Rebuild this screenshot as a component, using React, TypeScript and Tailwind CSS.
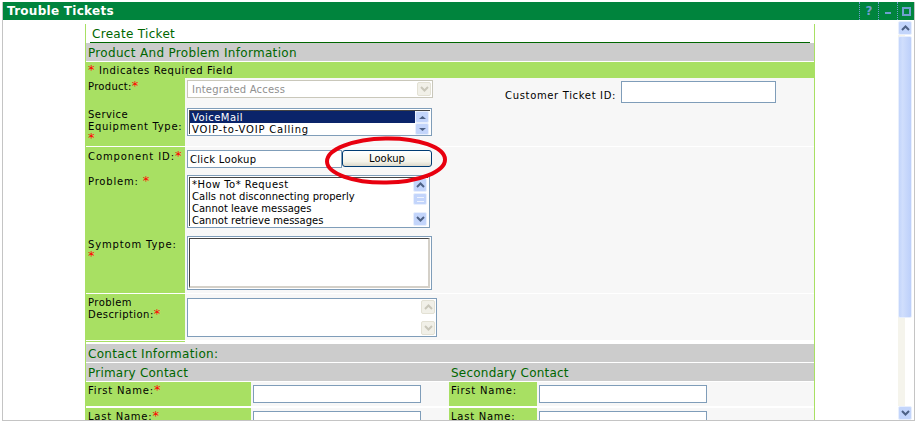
import React from "react";

const font = "font-['DejaVu_Sans','Liberation_Sans',sans-serif]";

function Star() {
  return <span className="text-[#ff0000] text-[13px] leading-[0] tracking-normal">*</span>;
}

function ScrollBtn({ dir, disabled = false }: { dir: "up" | "down"; disabled?: boolean }) {
  return (
    <div className={`w-[14px] h-[14px] flex items-center justify-center rounded-[2px] border ${disabled ? "bg-[#f1f0e8] border-[#e3e1d4]" : "bg-[#c3d5fb] border-[#e8effd]"}`}>
      <svg width="9" height="6" viewBox="0 0 9 6" fill="none" stroke={disabled ? "#c9c7ba" : "#4d6185"} strokeWidth="2">
        <path d={dir === "up" ? "M1 5L4.5 1.5L8 5" : "M1 1L4.5 4.5L8 1"} />
      </svg>
    </div>
  );
}

function MiniBtn({ dir }: { dir: "up" | "down" }) {
  return (
    <div className="w-[14px] h-[12px] flex items-center justify-center rounded-[2px] bg-[#c3d5fb] border border-[#e8effd]">
      <svg width="7" height="3" viewBox="0 0 7 3" fill="#4d6185">
        <path d={dir === "up" ? "M0 3L3.5 0L7 3Z" : "M0 0L7 0L3.5 3Z"} />
      </svg>
    </div>
  );
}

function Section({ children }: { children: React.ReactNode }) {
  return <div className="h-[18px] bg-[#cccccc] text-[#006600] text-[12px] leading-[20px] tracking-[0.32px] pl-[2px]">{children}</div>;
}

function TextInput() {
  return <div className="w-[168px] h-[18px] bg-white border border-[#7f9db9]" />;
}

export default function App() {
  return (
    <div className={`relative w-[920px] h-[425px] bg-white overflow-hidden pt-[2px] pl-[2px] ${font}`}>
      <div className="w-[913px] h-[419px] border-l border-r border-b border-[#c4c4c4] flex flex-col overflow-hidden">
        <div className="h-[18px] shrink-0 bg-[#00843d] flex items-center justify-between">
          <span className="text-white font-bold text-[12px] tracking-[0.28px] pl-[4px]">Trouble Tickets</span>
          <div className="flex h-[18px] text-[#6f9fd0]">
            <div className="w-[19px] h-full border-l border-dotted border-[#6f9fd0] flex items-center justify-center font-bold text-[12px]">?</div>
            <div className="w-[19px] h-full border-l border-dotted border-[#6f9fd0] flex items-center justify-center">
              <div className="w-[6px] h-[2px] mt-[3px] bg-[#6f9fd0]" />
            </div>
            <div className="w-[17px] h-full border-l border-dotted border-[#6f9fd0] flex items-center justify-center">
              <div className="w-[5px] h-[5px] border-2 border-[#6f9fd0] box-content" />
            </div>
          </div>
        </div>

        <div className="flex flex-1 min-h-0">
          <div className="flex-1 min-w-0 pl-[82px] pt-[4px] overflow-hidden">
            <div className="w-[730px] border-l border-r border-[#a8e063] text-[10px] leading-[12px] tracking-[0.45px] text-black">
              <div className="h-[19px] pl-[4px] pr-[4px]">
                <div className="h-[19px] border-b border-[#006600] text-[#006600] text-[12px] leading-[20px] tracking-[0.3px] pl-[2px]">Create Ticket</div>
              </div>
              <Section>Product And Problem Information</Section>
              <div className="flex h-[16px] mt-[1px] bg-[#a8e063] pl-[2px] leading-[17px] tracking-[0.62px]">
                <div className="w-[11px] shrink-0"><Star /></div>
                <div>Indicates Required Field</div>
              </div>

              <div className="flex h-[68px] bg-[#f7f7f7]">
                <div className="w-[99px] bg-[#a8e063] pl-[2px] pt-[3px] shrink-0">
                  <div className="tracking-[0.3px]">Product:<Star /></div>
                  <div className="mt-[16px]">Service</div>
                  <div className="tracking-[0.7px] whitespace-nowrap">Equipment Type:</div>
                  <div><Star /></div>
                </div>
                <div className="flex-1 pl-[2px] pt-[2px]">
                  <div className="flex items-start">
                    <div className="w-[246px] h-[18px] border border-[#c9c7ba] bg-white flex items-center justify-between pl-[4px] pr-[1px] text-[#909090] tracking-[0.2px] leading-[18px]">
                      <span className="pt-[1px]">Integrated Access</span>
                      <ScrollBtn dir="down" disabled />
                    </div>
                    <div className="ml-[72px] pt-[10px] pr-[5px] w-[116px] flex justify-end tracking-[0.65px] whitespace-nowrap">Customer Ticket ID:</div>
                    <div className="w-[155px] h-[22px] mt-[1px] bg-white border border-[#7f9db9]" />
                  </div>
                  <div className="mt-[5px] w-[245px] h-[28px] border border-[#7f9db9] p-[1px] bg-white">
                    <div className="h-full border-l border-t border-[#444444] flex">
                      <div className="flex-1">
                        <div className="h-[12px] bg-[#0a246a] text-white pl-[2px] leading-[13px]">VoiceMail</div>
                        <div className="h-[12px] pl-[2px] tracking-[0.8px] leading-[13px]">VOIP-to-VOIP Calling</div>
                      </div>
                      <div className="w-[15px] pr-[1px]">
                        <MiniBtn dir="up" />
                        <MiniBtn dir="down" />
                      </div>
                    </div>
                  </div>
                </div>
              </div>

              <div className="flex mt-[1px] h-[146px] bg-[#f7f7f7]">
                <div className="w-[99px] bg-[#a8e063] pl-[2px] pt-[4px] shrink-0">
                  <div className="tracking-[0.9px] whitespace-nowrap">Component ID:<Star /></div>
                  <div className="mt-[13px] tracking-[0.8px]">Problem: <Star /></div>
                  <div className="mt-[51px] tracking-[0.85px] whitespace-nowrap">Symptom Type:</div>
                  <div><Star /></div>
                </div>
                <div className="flex-1 pl-[2px] pt-[3px]">
                  <div className="flex">
                    <div className="w-[155px] h-[18px] bg-white border border-[#7f9db9] pl-[2px] leading-[17px] tracking-[0.3px]">Click Lookup</div>
                    <div className="w-[90px] h-[17px] rounded-[3px] border border-[#003c74] bg-[linear-gradient(180deg,#ffffff,#f4f3ea_70%,#dcd8ca)] text-center leading-[16px] tracking-[0px]">Lookup</div>
                  </div>
                  <div className="mt-[7px] w-[243px] h-[53px] border border-[#7f9db9] p-[1px] bg-white">
                    <div className="h-full border-l border-t border-[#444444] flex">
                      <div className="flex-1 pl-[2px] pt-[1px]">
                        <div>*How To* Request</div>
                        <div className="tracking-[0.05px]">Calls not disconnecting properly</div>
                        <div className="tracking-[0px]">Cannot leave messages</div>
                        <div className="tracking-[0px]">Cannot retrieve messages</div>
                      </div>
                      <div className="w-[15px] pr-[1px] flex flex-col">
                        <ScrollBtn dir="up" />
                        <div className="h-[12px] mt-[1px] bg-[#c3d5fb] border border-[#e8effd] rounded-[2px] flex items-center justify-center">
                          <div className="w-[7px] h-[5px] border-t border-b border-[#eef3fe]" />
                        </div>
                        <div className="flex-1" />
                        <ScrollBtn dir="down" />
                      </div>
                    </div>
                  </div>
                  <div className="mt-[8px] w-[245px] h-[54px] border border-[#7f9db9] p-[1px] bg-white">
                    <div className="h-full border-l border-t border-[#444444] border-r-2 border-b-2 border-r-[#d4d0c8] border-b-[#d4d0c8]" />
                  </div>
                </div>
              </div>

              <div className="flex mt-[1px] h-[47px] bg-[#f7f7f7] border-b border-white">
                <div className="w-[99px] bg-[#a8e063] pl-[2px] pt-[3px] shrink-0">
                  <div>Problem</div>
                  <div>Description:<Star /></div>
                </div>
                <div className="flex-1 pl-[2px] pt-[4px]">
                  <div className="w-[250px] h-[39px] bg-white border border-[#7f9db9] flex justify-end pr-[1px] pt-[1px]">
                    <div className="flex flex-col justify-between pb-[1px]">
                      <ScrollBtn dir="up" disabled />
                      <ScrollBtn dir="down" disabled />
                    </div>
                  </div>
                </div>
              </div>
              <div className="w-[99px] h-[1px] bg-[#a8e063]" />
              <div className="h-[2px]" />

              <Section>Contact Information:</Section>
              <div className="h-[18px] mt-[1px] bg-[#cccccc] flex text-[#006600] text-[12px] leading-[20px] tracking-[0.22px]">
                <div className="w-[363px] pl-[2px]">Primary Contact</div>
                <div className="pl-[2px]">Secondary Contact</div>
              </div>

              {[
                { a: "First Name:", mt: "mt-[1px]", t: "tracking-[0.8px]" },
                { a: "Last Name:", mt: "mt-[2px]", t: "tracking-[0.75px]" },
              ].map((r) => (
                <div key={r.a} className={`flex h-[24px] bg-[#f7f7f7] ${r.mt}`}>
                  <div className={`w-[165px] bg-[#a8e063] pl-[2px] pt-[3px] ${r.t}`}>{r.a}<Star /></div>
                  <div className="w-[198px] pl-[2px] pt-[3px]"><TextInput /></div>
                  <div className={`w-[88px] bg-[#a8e063] pl-[2px] pt-[3px] ${r.t}`}>{r.a}</div>
                  <div className="pl-[2px] pt-[3px]"><TextInput /></div>
                </div>
              ))}
            </div>
          </div>

          <div className="w-[15px] shrink-0 mr-[1px] flex flex-col bg-white pt-[1px]">
            <ScrollBtn dir="up" />
            <div className="flex-1 flex flex-col pt-[1px] bg-[linear-gradient(90deg,#f5f4ec_45%,#ffffff_45%)]">
              <div className="h-[282px] w-[14px] bg-[linear-gradient(90deg,#c3d5fb,#d0defc_30%,#bccffa)] border border-[#e8effd] rounded-[2px]" />
            </div>
            <ScrollBtn dir="down" />
          </div>
        </div>
      </div>

      <svg className="absolute left-[320px] top-[132px]" width="132" height="56" viewBox="0 0 132 56" fill="none">
        <ellipse cx="66" cy="28.5" rx="59" ry="22" stroke="#e8000f" strokeWidth="4" transform="rotate(-1 66 28)" />
      </svg>
    </div>
  );
}
